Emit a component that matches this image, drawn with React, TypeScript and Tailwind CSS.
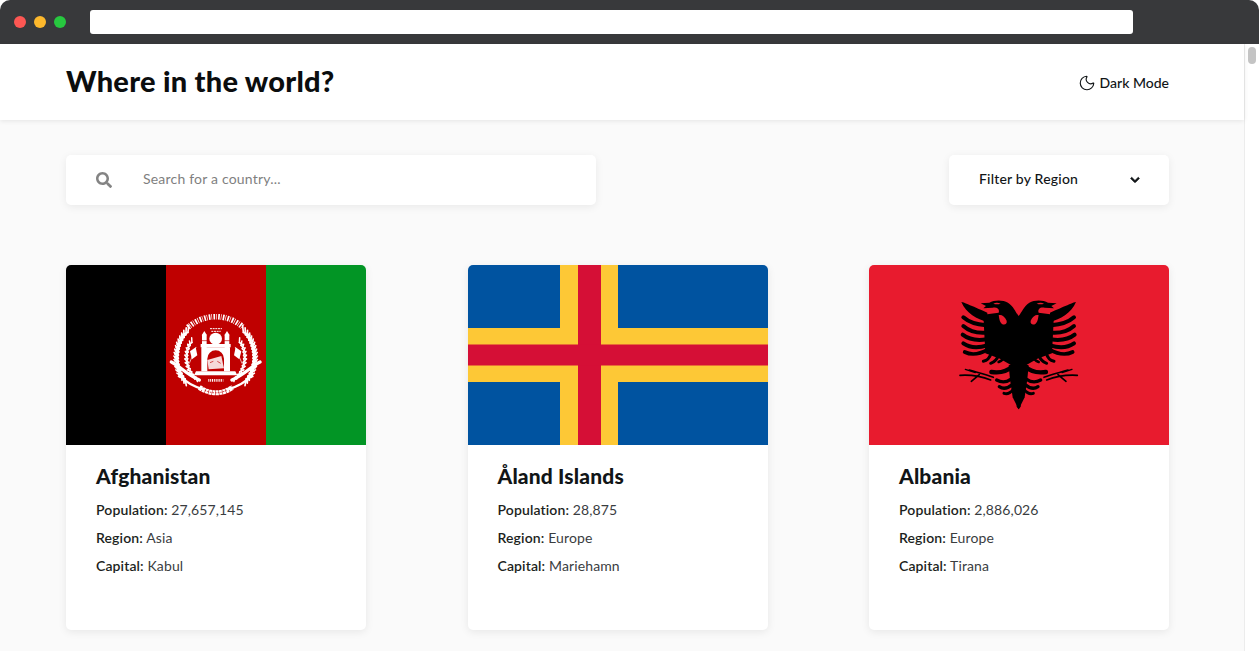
import React from "react";
import { Moon } from "lucide-react";
import { FaSearch, FaChevronDown } from "react-icons/fa";

const grains = (cx: number, cy: number, r: number, from: number, to: number, n: number, len: number, lean: number) => {
  let d = "";
  for (let i = 0; i < n; i++) {
    const a = ((from + ((to - from) * i) / (n - 1)) * Math.PI) / 180;
    const x = cx + r * Math.cos(a);
    const y = cy + r * Math.sin(a);
    const b = a + (lean * Math.PI) / 180;
    const ex = x + len * Math.cos(b);
    const ey = y + len * Math.sin(b);
    d += `M${x.toFixed(1)} ${y.toFixed(1)}L${ex.toFixed(1)} ${ey.toFixed(1)}`;
  }
  return d;
};

function AfghanFlag() {
  const side = (
    <g fill="none" stroke="#ffffff" strokeLinecap="round">
      {/* outer wheat */}
      <path d={grains(167, 172, 112, 145, 222, 17, 21, 55)} strokeWidth="5" />
      <path d={grains(167, 172, 112, 145, 222, 17, 21, -65)} strokeWidth="5" />
      {/* inner wheat */}
      <path d={grains(167, 172, 84, 135, 212, 12, 14, 55)} strokeWidth="4.5" />
      <path d={grains(167, 172, 84, 135, 212, 12, 14, -65)} strokeWidth="4.5" />
      {/* ribbon */}
      <path d="M34 186 C56 196 78 222 118 240" strokeWidth="10" />
      <path d="M58 226 C82 252 108 262 130 268" strokeWidth="7" />
      {/* flag */}
      <path d="M88 190 L108 142" strokeWidth="2" />
      <path d="M107 142 L90 154 L96 178 L112 166 Z" fill="#ffffff" stroke="none" />
      {/* minaret */}
      <path d="M126 104 H140 V152 H126 Z" fill="#ffffff" stroke="none" />
      <path d="M133 93 L141 106 H125 Z" fill="#ffffff" stroke="none" />
      <path d="M124 122 H142" stroke="#bf0000" strokeWidth="2" />
    </g>
  );
  return (
    <svg viewBox="0 0 300 180" className="block w-[300px] h-[180px]">
      <rect width="100" height="180" fill="#000000" />
      <rect x="100" width="101" height="180" fill="#bf0000" />
      <rect x="200" width="100" height="180" fill="#029525" />
      <g transform="translate(94 35) scale(0.3333)">
        {/* calligraphy */}
        <path d="M84 82 A124 124 0 0 1 250 82" fill="none" stroke="#ffffff" strokeWidth="17" strokeDasharray="5 3 2 4" />
        <path d="M98 60 A116 116 0 0 1 236 60" fill="none" stroke="#bf0000" strokeWidth="2" />
        <path d="M150 86 H186 M154 94 H182" fill="none" stroke="#ffffff" strokeWidth="3" strokeDasharray="6 2" />
        {side}
        <g transform="translate(334 0) scale(-1 1)">{side}</g>
        {/* mosque */}
        <ellipse cx="167" cy="116" rx="19" ry="18" fill="#ffffff" />
        <rect x="122" y="132" width="90" height="10" fill="#ffffff" />
        <path d="M124 142 H210 V214 H192 V176 A25 25 0 0 0 142 176 V214 H124 Z" fill="#ffffff" />
        <path d="M142 180 L184 168 L192 205 L146 208 Z" fill="#ffffff" opacity="0.85" />
        <path d="M150 188 L160 184 M172 184 L182 190" stroke="#bf0000" strokeWidth="2" />
        <path d="M108 214 H226 L232 226 H102 Z" fill="#ffffff" />
        {/* date and lower ribbon */}
        <path d="M145 241 H190" stroke="#ffffff" strokeWidth="8" strokeDasharray="3 2.5" />
        <path d="M118 262 C150 284 186 284 218 262" fill="none" stroke="#ffffff" strokeWidth="15" strokeDasharray="9 1.5" />
        <path d="M134 271 C156 281 178 281 200 271" fill="none" stroke="#bf0000" strokeWidth="2" strokeDasharray="5 3" />
      </g>
    </svg>
  );
}

function AlandFlag() {
  return (
    <svg viewBox="0 0 300 180" className="block w-[300px] h-[180px]">
      <rect width="300" height="180" fill="#0053a0" />
      <rect x="92" width="58" height="180" fill="#fdc836" />
      <rect y="63" width="300" height="54" fill="#fdc836" />
      <rect x="110" width="23" height="180" fill="#d50f36" />
      <rect y="79.5" width="300" height="21" fill="#d50f36" />
    </svg>
  );
}

function AlbanianFlag() {
  const half = (
    <g>
      {/* head, neck and body */}
      <path d="M212 84 L206 78 C196 66 192 50 174 38 C158 29 132 30 118 38 L92 40 L108 48 L100 55 L128 53 C140 50 150 56 146 68 L100 74 L106 190 L150 206 L184 226 L212 236 Z" fill="#000" />
      <path d="M146 76 C152 72 164 78 170 92 C172 102 164 106 156 102 C148 96 148 84 146 76 Z" fill="#e81b2e" />
      <path d="M130 41 Q140 36 152 41 Q140 45 130 41 Z" fill="#e81b2e" />
      {/* first large feather */}
      <path d="M34 36 C44 38 52 42 60 46 C76 52 92 60 112 68 L112 96 C82 88 48 70 34 36 Z" fill="#000" />
      <g fill="none" stroke="#000" strokeLinecap="round">
        <path d="M40 82 C58 98 82 104 108 106" strokeWidth="12" />
        <path d="M40 108 C58 124 82 130 108 128" strokeWidth="12" />
        <path d="M38 134 C58 150 84 152 110 148" strokeWidth="12" />
        <path d="M40 160 C60 174 86 174 112 166" strokeWidth="12" />
        <path d="M44 186 C64 196 90 192 114 178" strokeWidth="11" />
        <path d="M100 214 C112 212 120 202 124 188" strokeWidth="9" />
        <path d="M122 220 C134 216 142 206 146 194" strokeWidth="9" />
        <path d="M146 216 C156 212 162 206 164 198" strokeWidth="8" />
        {/* leg and claws */}
        <path d="M188 228 C172 244 150 250 124 246" strokeWidth="13" />
        <path d="M130 262 C104 252 84 248 58 240" strokeWidth="5" />
        <path d="M122 270 C92 258 62 254 30 256" strokeWidth="5" />
        <path d="M88 254 L64 274" strokeWidth="5" />
        <path d="M76 248 L46 238" strokeWidth="4" />
        {/* tail */}
        <path d="M140 270 C154 278 168 278 182 268" strokeWidth="10" />
        <path d="M148 290 C160 298 172 296 186 284" strokeWidth="10" />
        <path d="M162 310 C174 314 182 308 190 298" strokeWidth="9" />
      </g>
      {/* tail centre */}
      <path d="M212 218 L176 226 L180 268 L188 322 L206 358 L212 350 Z" fill="#000" />
    </g>
  );
  return (
    <svg viewBox="0 0 300 180" className="block w-[300px] h-[180px]">
      <rect width="300" height="180" fill="#e81b2e" />
      <g transform="translate(81 25) scale(0.3333)">
        {half}
        <g transform="translate(412 0) scale(-1 1)">{half}</g>
      </g>
    </svg>
  );
}

const countries = [
  { name: "Afghanistan", population: "27,657,145", region: "Asia", capital: "Kabul", flag: <AfghanFlag /> },
  { name: "Åland Islands", population: "28,875", region: "Europe", capital: "Mariehamn", flag: <AlandFlag /> },
  { name: "Albania", population: "2,886,026", region: "Europe", capital: "Tirana", flag: <AlbanianFlag /> },
];

function Fact({ label, value }: { label: string; value: string }) {
  return (
    <p className="text-[14px] leading-[28px] text-[#3a3d3f] tracking-[0.12px]">
      <span className="font-semibold text-[#1c1f21]">{label}:</span> {value}
    </p>
  );
}

export default function App() {
  return (
    <div className="h-[651px] w-[1259px] overflow-hidden flex flex-col bg-white font-['Lato',sans-serif]">
      <div className="h-[44px] shrink-0 bg-[#38393b] rounded-t-[10px] flex items-center pl-[14px] pr-[126px]">
        <span className="w-[12px] h-[12px] rounded-full bg-[#fd5753]" />
        <span className="w-[12px] h-[12px] rounded-full bg-[#fdb82c] ml-[8px]" />
        <span className="w-[12px] h-[12px] rounded-full bg-[#27c83f] ml-[8px]" />
        <div className="ml-[24px] flex-1 h-[24px] bg-white rounded-[3px]" />
      </div>
      <div className="flex flex-1 min-h-0">
        <div className="w-[1244px] shrink-0 bg-[#fafafa] flex flex-col">
          <header className="h-[76px] shrink-0 bg-white shadow-[0_1px_5px_rgba(0,0,0,0.09)] flex items-center justify-between pl-[66px] pr-[75px] relative">
            <h1 className="text-[29px] font-black text-[#0b0d0e] tracking-[0.25px] mb-[3px]">Where in the world?</h1>
            <div className="flex items-center gap-[4px] text-[14px] font-medium text-[#111517] mt-[1px]">
              <Moon size={18} strokeWidth={1.5} />
              <span>Dark Mode</span>
            </div>
          </header>
          <main className="pl-[66px] pr-[75px] pt-[35px]">
            <div className="flex justify-between">
              <div className="w-[530px] h-[50px] bg-white rounded-[5px] shadow-[0_2px_9px_rgba(0,0,0,0.07)] flex items-center pl-[30px]">
                <FaSearch className="text-[#848484] w-[16px] h-[16px]" />
                <span className="ml-[31px] text-[14px] text-[#7f7f7f] tracking-[0.2px] mb-[3px]">Search for a country...</span>
              </div>
              <div className="w-[220px] h-[50px] bg-white rounded-[5px] shadow-[0_2px_9px_rgba(0,0,0,0.07)] flex items-center justify-between pl-[30px] pr-[29px]">
                <span className="text-[14px] font-medium text-[#111517] tracking-[0.2px] mb-[3px]">Filter by Region</span>
                <FaChevronDown className="text-[#111517] w-[10px] h-[10px] stroke-current stroke-[40]" />
              </div>
            </div>
            <div className="mt-[60px] flex justify-between">
              {countries.map((c) => (
                <article key={c.name} className="w-[300px] h-[365px] bg-white rounded-[5px] overflow-hidden shadow-[0_2px_9px_rgba(0,0,0,0.08)]">
                  {c.flag}
                  <div className="pl-[30px] pt-[18px]">
                    <h2 className="text-[21px] leading-[26px] font-black text-[#111517] mb-[7px] tracking-[0.15px]">{c.name}</h2>
                    <Fact label="Population" value={c.population} />
                    <Fact label="Region" value={c.region} />
                    <Fact label="Capital" value={c.capital} />
                  </div>
                </article>
              ))}
            </div>
          </main>
        </div>
        <div className="w-[15px] shrink-0 bg-white border-l border-[#ececec] pt-[3px] flex justify-center">
          <div className="w-[8px] h-[17px] rounded-[4px] bg-[#c4c4c4]" />
        </div>
      </div>
    </div>
  );
}
